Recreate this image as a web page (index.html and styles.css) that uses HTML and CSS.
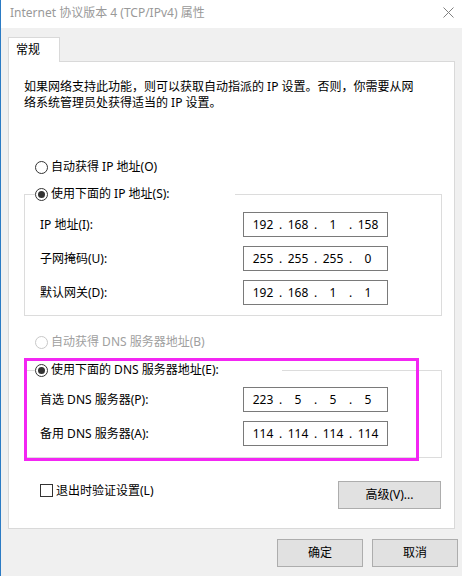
FILE: index.html
```html
<!DOCTYPE html>
<html lang="zh-CN">
<head>
<meta charset="utf-8">
<title>Internet 协议版本 4 (TCP/IPv4) 属性</title>
<link rel="stylesheet" href="styles.css">
</head>
<body>
<div class="window">
  <div class="titlebar">
    <span class="title">Internet 协议版本 4 (TCP/IPv4) 属性</span>
    <svg class="close" width="11" height="11" viewBox="0 0 11 11" aria-hidden="true">
      <path d="M0.5 0.5L10.5 10.5M10.5 0.5L0.5 10.5" stroke="#808080" stroke-width="1" fill="none"/>
    </svg>
  </div>
  <div class="client">
    <div class="tabs"><div class="tab">常规</div></div>
    <div class="panel">
      <p class="desc">如果网络支持此功能，则可以获取自动指派的 IP 设置。否则，你需要从网<br>络系统管理员处获得适当的 IP 设置。</p>

      <div class="option opt-auto-ip"><span class="radio"></span><span>自动获得 IP 地址(O)</span></div>

      <div class="group group-ip">
        <div class="legend legend-ip"><span class="radio checked"></span><span>使用下面的 IP 地址(S):</span></div>
        <div class="field first">
          <span class="label">IP 地址(I):</span>
          <div class="ipbox"><span class="seg">192</span><span class="dot">.</span><span class="seg">168</span><span class="dot">.</span><span class="seg">1</span><span class="dot">.</span><span class="seg">158</span></div>
        </div>
        <div class="field">
          <span class="label">子网掩码(U):</span>
          <div class="ipbox"><span class="seg">255</span><span class="dot">.</span><span class="seg">255</span><span class="dot">.</span><span class="seg">255</span><span class="dot">.</span><span class="seg">0</span></div>
        </div>
        <div class="field">
          <span class="label">默认网关(D):</span>
          <div class="ipbox"><span class="seg">192</span><span class="dot">.</span><span class="seg">168</span><span class="dot">.</span><span class="seg">1</span><span class="dot">.</span><span class="seg">1</span></div>
        </div>
      </div>

      <div class="option opt-auto-dns disabled"><span class="radio"></span><span>自动获得 DNS 服务器地址(B)</span></div>

      <div class="group group-dns">
        <div class="legend legend-dns"><span class="radio checked"></span><span>使用下面的 DNS 服务器地址(E):</span></div>
        <div class="field first">
          <span class="label">首选 DNS 服务器(P):</span>
          <div class="ipbox"><span class="seg">223</span><span class="dot">.</span><span class="seg">5</span><span class="dot">.</span><span class="seg">5</span><span class="dot">.</span><span class="seg">5</span></div>
        </div>
        <div class="field">
          <span class="label">备用 DNS 服务器(A):</span>
          <div class="ipbox"><span class="seg">114</span><span class="dot">.</span><span class="seg">114</span><span class="dot">.</span><span class="seg">114</span><span class="dot">.</span><span class="seg">114</span></div>
        </div>
      </div>

      <div class="footer-row">
        <div class="check-row"><span class="checkbox"></span><span>退出时验证设置(L)</span></div>
        <button class="btn btn-advanced" type="button">高级(V)...</button>
      </div>

      <div class="highlight"></div>
    </div>
    <div class="actions">
      <button class="btn btn-action" type="button">确定</button>
      <button class="btn btn-action" type="button">取消</button>
    </div>
  </div>
</div>
</body>
</html>
```
FILE: styles.css
```css
* { box-sizing: border-box; }

html, body {
  margin: 0;
  padding: 0;
  background: #f0f0f0;
}

body {
  font-family: "Noto Sans", "Noto Sans CJK SC", sans-serif;
  font-size: 12px;
  line-height: 16px;
  color: #000;
}

.window {
  width: 462px;
  height: 576px;
  border-left: 1px solid #2b7bc4;
  background: #f0f0f0;
  overflow: hidden;
}

.titlebar {
  height: 28px;
  background: #fff;
  display: flex;
  justify-content: space-between;
  align-items: flex-start;
  padding: 5px 8px 0 9px;
}

.title {
  color: #999;
}

.close {
  margin-top: 2px;
  display: block;
}

.client {
  padding: 9px 0 0 7px;
}

.tabs {
  display: flex;
  position: relative;
  z-index: 1;
  margin-bottom: -1px;
}

.tab {
  width: 52px;
  height: 25px;
  background: #fff;
  border: 1px solid #d9d9d9;
  border-bottom: none;
  padding: 4px 0 0 7px;
}

.panel {
  position: relative;
  width: 447px;
  height: 468px;
  background: #fff;
  border: 1px solid #d9d9d9;
  padding: 17px 12px 0 15px;
}

.desc {
  margin: 0;
}

.option {
  display: flex;
  align-items: center;
  height: 16px;
  margin-left: 11px;
  gap: 3px;
}

.opt-auto-ip { margin-top: 48px; }
.opt-auto-dns { margin-top: 18px; }

.option.disabled { color: #a0a0a0; }
.option.disabled .radio { border-color: #c8c8c8; }

.radio {
  width: 13px;
  height: 13px;
  border: 1px solid #333;
  border-radius: 50%;
  background: #fff;
  display: inline-flex;
  align-items: center;
  justify-content: center;
  flex: none;
}

.radio.checked::after {
  content: "";
  width: 7px;
  height: 7px;
  border-radius: 50%;
  background: #333;
}

.group {
  width: 418px;
  border: 1px solid #dcdcdc;
  padding: 0 0 10px 15px;
}

.group-ip { margin-top: 19px; }
.group-dns { margin-top: 20px; padding-bottom: 11px; }

.legend {
  display: flex;
  align-items: center;
  gap: 3px;
  height: 16px;
  margin: -9px 0 0 -5px;
  background: #fff;
}

.legend-ip { width: 200px; }
.legend-dns { width: 247px; }

.field {
  display: flex;
  align-items: center;
  margin-top: 9px;
}

.field.first { margin-top: 10px; }
.group-dns .field.first { margin-top: 9px; }

.label {
  width: 203px;
  flex: none;
}

.ipbox {
  width: 145px;
  height: 25px;
  border: 1px solid #7a7a7a;
  display: flex;
  align-items: center;
  padding-left: 6px;
}

.seg {
  width: 26px;
  text-align: center;
}

.dot {
  width: 9px;
  text-align: center;
}

.footer-row {
  display: flex;
  justify-content: space-between;
  align-items: flex-start;
  width: 417px;
  margin-top: 23px;
  padding-left: 16px;
}

.check-row {
  display: flex;
  align-items: center;
  gap: 3px;
  margin-top: 3px;
  height: 13px;
}

.checkbox {
  width: 13px;
  height: 13px;
  border: 1px solid #333;
  background: #fff;
  flex: none;
}

.btn {
  font: inherit;
  color: #000;
  background: #e1e1e1;
  border: 1px solid #adadad;
  height: 28px;
  padding: 0;
  margin: 0;
  border-radius: 0;
}

.btn-advanced { width: 103px; }

.actions {
  display: flex;
  justify-content: flex-end;
  gap: 9px;
  padding: 10px 4px 0 0;
}

.btn-action { width: 86px; }

.highlight {
  position: absolute;
  left: 15px;
  top: 296px;
  width: 395px;
  height: 103px;
  border: 3px solid #f326f3;
  pointer-events: none;
}
```
